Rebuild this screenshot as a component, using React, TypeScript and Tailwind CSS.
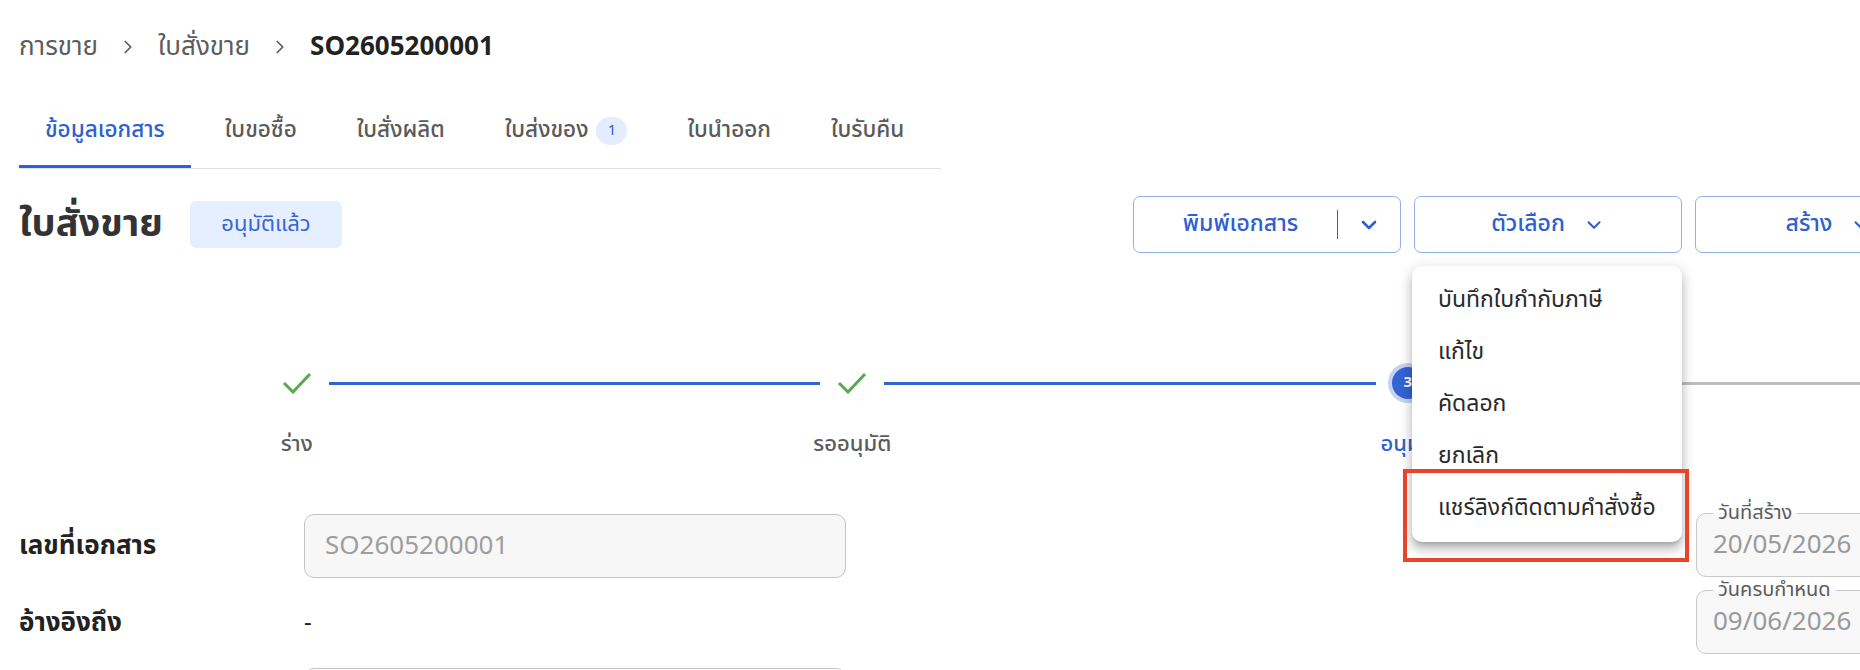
import React from "react";
import { ChevronDown, ChevronRight } from "lucide-react";

const FONT = { fontFamily: '"Noto Sans Thai", "Noto Sans", "DejaVu Sans", sans-serif' };

function Check() {
  return (
    <svg width="30" height="22" viewBox="0 0 30 22" fill="none">
      <path d="M2 11 L11 20 L28 2" stroke="#5aa852" strokeWidth="3" strokeLinecap="butt" strokeLinejoin="miter" />
    </svg>
  );
}

const tabs = ["ข้อมูลเอกสาร", "ใบขอซื้อ", "ใบสั่งผลิต", "ใบส่งของ", "ใบนำออก", "ใบรับคืน"];

function DateField({ label, value }: { label: string; value: string }) {
  return (
    <fieldset className="w-[300px] h-[74px] border border-[#c9c9c9] rounded-[10px] bg-[#f8f8f8] pl-[16px] pr-0">
      <legend className="px-[5px] text-[20px] leading-[20px] text-[#5c5c5c]">{label}</legend>
      <div className="text-[26px] leading-[30px] text-[#9a9a9a] mt-[7px]">{value}</div>
    </fieldset>
  );
}

export default function App() {
  return (
    <div className="relative w-[1860px] h-[670px] overflow-hidden bg-white text-[#333]" style={FONT}>
      <div className="pl-[19px] w-[2300px]">
        {/* breadcrumb */}
        <div className="pt-[30px] h-[64px] flex items-center text-[26px] leading-[34px] text-[#5c5c5c]">
          <span>การขาย</span>
          <ChevronRight className="mx-[19px]" size={22} strokeWidth={1.8} color="#555" />
          <span>ใบสั่งขาย</span>
          <ChevronRight className="mx-[19px]" size={22} strokeWidth={1.8} color="#555" />
          <span className="font-bold text-[#222]">SO2605200001</span>
        </div>

        {/* tabs */}
        <div className="mt-[30px] w-[922px] flex border-b border-[#e0e0e0]">
          {tabs.map((t, i) => (
            <div key={t} className="relative h-[74px] px-[26px] mr-[8px] flex items-center text-[22.5px]">
              <span className={i === 0 ? "text-[#2f5fd0] font-medium" : "text-[#5a5a5a] font-medium"}>{t}</span>
              {t === "ใบส่งของ" && (
                <span className="ml-[8px] w-[31px] h-[28px] rounded-full bg-[#e4edff] text-[#2f5fd0] text-[15px] flex items-center justify-center">1</span>
              )}
              {i === 0 && <div className="absolute left-0 right-0 bottom-0 h-[3px] bg-[#2f5fd0]" />}
            </div>
          ))}
        </div>

        {/* title row */}
        <div className="mt-[27px] w-[1944px] h-[57px] flex items-center justify-between">
          <div className="flex items-center">
            <h1 className="text-[38px] font-bold text-[#333] leading-[46px]">ใบสั่งขาย</h1>
            <span className="ml-[27px] w-[152px] h-[47px] rounded-[6px] bg-[#e6efff] text-[#3766d8] text-[22px] flex items-center justify-center">อนุมัติแล้ว</span>
          </div>
          <div className="flex gap-[13px]">
            <div className="w-[268px] h-[57px] border border-[#93adef] rounded-[7px] flex items-center text-[#2f5fd0] text-[23px] font-medium">
              <span className="flex-1 text-center pl-[10px]">พิมพ์เอกสาร</span>
              <span className="w-px h-[29px] bg-[#2f5fd0]" />
              <span className="w-[62px] flex justify-center"><ChevronDown size={24} strokeWidth={2.6} /></span>
            </div>
            <div className="w-[268px] h-[57px] border border-[#93adef] rounded-[7px] flex items-center justify-center gap-[18px] text-[#2f5fd0] text-[23px] font-medium">
              <span>ตัวเลือก</span>
              <ChevronDown size={22} strokeWidth={2.2} />
            </div>
            <div className="w-[268px] h-[57px] border border-[#93adef] rounded-[7px] flex items-center justify-center gap-[18px] text-[#2f5fd0] text-[23px] font-medium">
              <span>สร้าง</span>
              <ChevronDown size={22} strokeWidth={2.2} />
            </div>
          </div>
        </div>

        {/* stepper */}
        <div className="mt-[110px] grid grid-cols-4 w-[2222px]">
          {[
            { label: "ร่าง", state: "done" },
            { label: "รออนุมัติ", state: "done" },
            { label: "อนุมัติ", state: "active" },
            { label: "เสร็จสิ้น", state: "todo" },
          ].map((s, i) => (
            <div key={s.label} className="relative flex flex-col items-center">
              {i > 0 && (
                <div
                  className={
                    "absolute top-[19px] h-[3px] left-[calc(-50%+32px)] right-[calc(50%+32px)] " +
                    (i <= 2 ? "bg-[#3464d4]" : "bg-[#bdbdbd]")
                  }
                />
              )}
              <div className="h-[40px] w-[40px] flex items-center justify-center">
                {s.state === "done" && <Check />}
                {s.state === "active" && (
                  <div className="w-[40px] h-[40px] rounded-full bg-[#c7d2f1] flex items-center justify-center">
                    <div className="w-[32px] h-[32px] rounded-full bg-[#3464d4] text-white text-[15px] font-bold flex items-center justify-center">3</div>
                  </div>
                )}
                {s.state === "todo" && (
                  <div className="w-[32px] h-[32px] rounded-full bg-[#bdbdbd] text-white text-[15px] flex items-center justify-center">4</div>
                )}
              </div>
              <div
                className={
                  "mt-[27px] text-[22px] leading-[30px] " +
                  (s.state === "active" ? "text-[#2f5fd0] font-medium" : "text-[#5c5c5c] font-medium")
                }
              >
                {s.label}
              </div>
            </div>
          ))}
        </div>

        {/* form */}
        <div className="mt-[54px] flex">
          <div className="w-[827px] flex flex-col gap-[13px]">
            <div className="flex items-center h-[64px]">
              <div className="w-[285px] text-[26px] font-bold text-[#222]">เลขที่เอกสาร</div>
              <div className="w-[542px] h-[64px] rounded-[10px] border border-[#c4c4c4] bg-[#f7f7f7] flex items-center px-[20px] text-[26px] text-[#9e9e9e]">SO2605200001</div>
            </div>
            <div className="flex items-center h-[64px]">
              <div className="w-[285px] text-[26px] font-bold text-[#222]">อ้างอิงถึง</div>
              <div className="text-[24px] text-[#222]">-</div>
            </div>
            <div className="flex items-center h-[64px]">
              <div className="w-[285px]" />
              <div className="w-[542px] h-[64px] rounded-[10px] border border-[#c4c4c4] bg-white" />
            </div>
          </div>
          <div className="ml-[850px] -mt-[11px] flex flex-col gap-[3px]">
            <DateField label="วันที่สร้าง" value="20/05/2026" />
            <DateField label="วันครบกำหนด" value="09/06/2026" />
          </div>
        </div>
      </div>

      {/* dropdown menu */}
      <div className="absolute left-[1412px] top-[266px] w-[270px] py-[8px] bg-white rounded-[10px] shadow-[0_5px_5px_-3px_rgba(0,0,0,0.2),0_8px_10px_1px_rgba(0,0,0,0.14),0_3px_14px_2px_rgba(0,0,0,0.12)] text-[23px] text-[#2a2a2a]">
        {["บันทึกใบกำกับภาษี", "แก้ไข", "คัดลอก", "ยกเลิก", "แชร์ลิงก์ติดตามคำสั่งซื้อ"].map((m) => (
          <div key={m} className="h-[52px] flex items-center pl-[26px] whitespace-nowrap">{m}</div>
        ))}
      </div>
      <div className="absolute left-[1403px] top-[469px] w-[286px] h-[93px] border-[4px] border-[#e8442c]" />
    </div>
  );
}
